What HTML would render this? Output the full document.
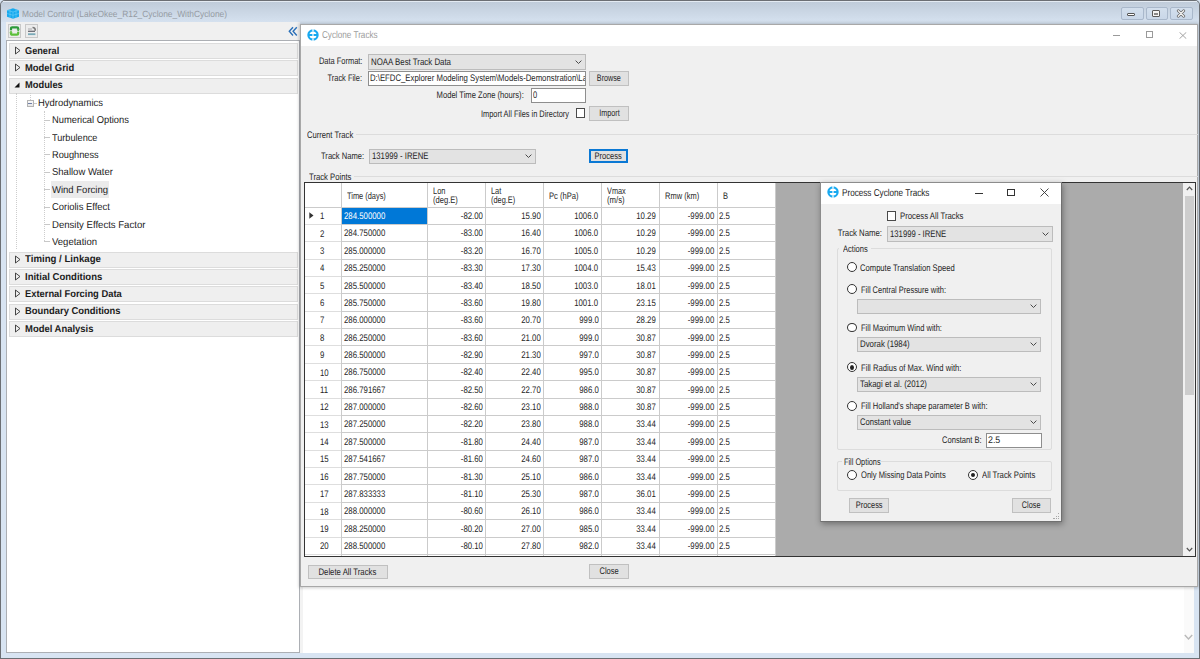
<!DOCTYPE html>
<html><head><meta charset="utf-8">
<style>
*{box-sizing:border-box;margin:0;padding:0}
html,body{width:1200px;height:659px;overflow:hidden;text-rendering:geometricPrecision;background:#d8e4f2;font-family:"Liberation Sans",sans-serif;color:#1a1a1a}
.a{position:absolute}
.t{position:absolute;white-space:nowrap;line-height:1}
</style></head><body>
<div class="a" style="left:0px;top:0px;width:1200px;height:659px;background:#6c6f74;border-radius:5px 5px 0 0"></div>
<div class="a" style="left:1px;top:1px;width:1198px;height:657px;background:#d8e4f2;border-radius:5px 5px 0 0"></div>
<div class="a" style="left:1px;top:1px;width:1198px;height:21px;background:linear-gradient(#bfcbd9,#d5e1ef);border-radius:4px 4px 0 0"></div>
<div class="a" style="left:3px;top:1px;width:1194px;height:1px;background:#e4ebf3"></div>
<svg class="a" style="left:6px;top:7px" width="14" height="13" viewBox="0 0 14 13"><path d="M1 3.2 L7 1.3 L13 3.2 L13 9.8 L7 11.8 L1 9.8 Z" fill="#17a9ee"/><path d="M1 3.2 L7 5 L13 3.2 M7 5 L7 11.8 M4 2.2 L4 10.8 M10 2.2 L10 10.8 M1 6.5 L7 8.3 L13 6.5" stroke="#6fd0f8" stroke-width="0.7" fill="none" opacity="0.8"/></svg>
<div class="t" style="left:22.00px;top:10.40px;font-size:9.0px;color:#959ba3;font-weight:normal;letter-spacing:0px;transform:scaleX(0.9314);transform-origin:0 0;">Model Control (LakeOkee_R12_Cyclone_WithCyclone)</div>
<div class="a" style="left:1121px;top:7px;width:23px;height:13px;border:1px solid #a9b8cb;border-radius:2px;background:linear-gradient(#d3dfed,#c9d7e8)"></div>
<div class="a" style="left:1146px;top:7px;width:22px;height:13px;border:1px solid #a9b8cb;border-radius:2px;background:linear-gradient(#d3dfed,#c9d7e8)"></div>
<div class="a" style="left:1170px;top:7px;width:23px;height:13px;border:1px solid #a9b8cb;border-radius:2px;background:linear-gradient(#d3dfed,#c9d7e8)"></div>
<div class="a" style="left:1127px;top:13px;width:8px;height:3px;background:#fff;border:1px solid #555;border-radius:1px"></div>
<div class="a" style="left:1152px;top:10px;width:8px;height:7px;background:#f4f4f4;border:1.5px solid #5a5a5a;border-radius:1px"></div>
<div class="a" style="left:1154px;top:12.5px;width:4px;height:2px;background:#888"></div>
<svg class="a" style="left:1176px;top:9px" width="10" height="9" viewBox="0 0 10 9"><path d="M2.3 1.8 L7.7 7.2 M7.7 1.8 L2.3 7.2" stroke="#666" stroke-width="2.8" stroke-linecap="round"/><path d="M2.3 1.8 L7.7 7.2 M7.7 1.8 L2.3 7.2" stroke="#f4f4f4" stroke-width="1.3" stroke-linecap="round"/></svg>
<div class="a" style="left:6px;top:22px;width:294px;height:19px;background:#f0f0f0"></div>
<div class="a" style="left:8px;top:24px;width:13px;height:14px;border:1px solid #c8c8c8;background:#ececec"></div>
<svg class="a" style="left:9px;top:25px" width="11" height="12" viewBox="0 0 11 12"><path d="M2 5.2 V3.5 Q2 2.3 3.2 2.3 H8 Q9.2 2.3 9.2 3.5 V4.8" stroke="#2d9a3a" stroke-width="2.2" fill="none"/><path d="M9.2 6.8 V8.5 Q9.2 9.7 8 9.7 H3.2 Q2 9.7 2 8.5 V7.2" stroke="#5cbf3a" stroke-width="2.2" fill="none"/><path d="M7.6 4.6 L10.8 4.6 L9.2 6.4 Z" fill="#3aa83a"/><path d="M0.4 7.4 L3.6 7.4 L2 5.6 Z" fill="#5cbf3a"/></svg>
<div class="a" style="left:25px;top:24px;width:13px;height:14px;border:1px solid #c8c8c8;background:#ececec"></div>
<svg class="a" style="left:26px;top:25px" width="11" height="12" viewBox="0 0 11 12"><path d="M2 4 H6" stroke="#9a9aa0" stroke-width="0.8"/><path d="M2 6.3 H9" stroke="#6a6a72" stroke-width="1.3"/><path d="M6.5 2.5 Q9.5 2.5 9.2 5.8" stroke="#777" stroke-width="1.6" fill="none"/><rect x="2" y="8.3" width="7.4" height="1.8" fill="#7aaab8"/></svg>
<svg class="a" style="left:287.5px;top:26px" width="10" height="11" viewBox="0 0 10 11"><path d="M5 1.2 L1.3 5.3 L5 9.5 M8.8 1.2 L5.1 5.3 L8.8 9.5" stroke="#2b70b8" stroke-width="1.4" fill="none"/></svg>
<div class="a" style="left:6px;top:40px;width:294px;height:613px;background:#fff;border:1px solid #acafb4"></div>
<div class="a" style="left:9px;top:43px;width:289px;height:16px;background:#efefef;border:1px solid #dcdcdc"></div>
<svg class="a" style="left:13.8px;top:46.00px" width="8" height="9" viewBox="0 0 8 9"><path d="M1.5 1 L6 4.5 L1.5 8 Z" fill="none" stroke="#333" stroke-width="0.9"/></svg>
<div class="t" style="left:24.60px;top:46.70px;font-size:10px;color:#1c1c1c;font-weight:bold;letter-spacing:0px;transform:scaleX(0.9181);transform-origin:0 0;">General</div>
<div class="a" style="left:9px;top:60px;width:289px;height:16px;background:#efefef;border:1px solid #dcdcdc"></div>
<svg class="a" style="left:13.8px;top:63.38px" width="8" height="9" viewBox="0 0 8 9"><path d="M1.5 1 L6 4.5 L1.5 8 Z" fill="none" stroke="#333" stroke-width="0.9"/></svg>
<div class="t" style="left:24.60px;top:64.08px;font-size:10px;color:#1c1c1c;font-weight:bold;letter-spacing:0px;transform:scaleX(0.9419);transform-origin:0 0;">Model Grid</div>
<div class="a" style="left:9px;top:78px;width:289px;height:16px;background:#efefef;border:1px solid #dcdcdc"></div>
<svg class="a" style="left:13px;top:80.95px" width="8" height="8" viewBox="0 0 8 8"><path d="M6.5 1.5 L6.5 6.5 L1.5 6.5 Z" fill="#111"/></svg>
<div class="t" style="left:24.60px;top:81.45px;font-size:10px;color:#1c1c1c;font-weight:bold;letter-spacing:0px;transform:scaleX(0.9319);transform-origin:0 0;">Modules</div>
<div class="a" style="left:16px;top:93px;width:0;height:156px;border-left:1px dotted #cdcdcd"></div>
<div class="a" style="left:29.5px;top:93px;width:0;height:7px;border-left:1px dotted #cdcdcd"></div>
<div class="a" style="left:27px;top:100px;width:7px;height:7px;border:1px solid #b4b4b4;background:linear-gradient(#fafafa,#e6e6e6)"></div>
<div class="a" style="left:28px;top:103px;width:4px;height:1px;background:#6f7fa8"></div>
<div class="a" style="left:33.5px;top:103px;width:3px;height:0;border-top:1px solid #c8c8c8"></div>
<div class="t" style="left:38.30px;top:99.00px;font-size:10px;color:#1c1c1c;font-weight:normal;letter-spacing:0px;transform:scaleX(0.9431);transform-origin:0 0;">Hydrodynamics</div>
<div class="a" style="left:43.5px;top:111px;width:0;height:130.32px;border-left:1px dotted #cdcdcd"></div>
<div class="a" style="left:44px;top:119.70px;width:6px;height:0;border-top:1px solid #c8c8c8"></div>
<div class="t" style="left:52.10px;top:116.30px;font-size:10px;color:#1c1c1c;font-weight:normal;letter-spacing:0px;transform:scaleX(0.9348);transform-origin:0 0;">Numerical Options</div>
<div class="a" style="left:44px;top:137.07px;width:6px;height:0;border-top:1px solid #c8c8c8"></div>
<div class="t" style="left:52.10px;top:133.68px;font-size:10px;color:#1c1c1c;font-weight:normal;letter-spacing:0px;transform:scaleX(0.9140);transform-origin:0 0;">Turbulence</div>
<div class="a" style="left:44px;top:154.45px;width:6px;height:0;border-top:1px solid #c8c8c8"></div>
<div class="t" style="left:52.10px;top:151.05px;font-size:10px;color:#1c1c1c;font-weight:normal;letter-spacing:0px;transform:scaleX(0.9230);transform-origin:0 0;">Roughness</div>
<div class="a" style="left:44px;top:171.82px;width:6px;height:0;border-top:1px solid #c8c8c8"></div>
<div class="t" style="left:52.10px;top:168.43px;font-size:10px;color:#1c1c1c;font-weight:normal;letter-spacing:0px;transform:scaleX(0.9499);transform-origin:0 0;">Shallow Water</div>
<div class="a" style="left:44px;top:189.20px;width:6px;height:0;border-top:1px solid #c8c8c8"></div>
<div class="a" style="left:51px;top:181px;width:58px;height:17px;background:#ebebeb"></div>
<div class="t" style="left:52.10px;top:185.80px;font-size:10px;color:#1c1c1c;font-weight:normal;letter-spacing:0px;transform:scaleX(0.9507);transform-origin:0 0;">Wind Forcing</div>
<div class="a" style="left:44px;top:206.57px;width:6px;height:0;border-top:1px solid #c8c8c8"></div>
<div class="t" style="left:52.10px;top:203.18px;font-size:10px;color:#1c1c1c;font-weight:normal;letter-spacing:0px;transform:scaleX(0.9412);transform-origin:0 0;">Coriolis Effect</div>
<div class="a" style="left:44px;top:223.95px;width:6px;height:0;border-top:1px solid #c8c8c8"></div>
<div class="t" style="left:52.10px;top:220.55px;font-size:10px;color:#1c1c1c;font-weight:normal;letter-spacing:0px;transform:scaleX(0.9566);transform-origin:0 0;">Density Effects Factor</div>
<div class="a" style="left:44px;top:241.32px;width:6px;height:0;border-top:1px solid #c8c8c8"></div>
<div class="t" style="left:52.10px;top:237.93px;font-size:10px;color:#1c1c1c;font-weight:normal;letter-spacing:0px;transform:scaleX(0.9521);transform-origin:0 0;">Vegetation</div>
<div class="a" style="left:9px;top:252px;width:289px;height:16px;background:#efefef;border:1px solid #dcdcdc"></div>
<svg class="a" style="left:13.8px;top:254.50px" width="8" height="9" viewBox="0 0 8 9"><path d="M1.5 1 L6 4.5 L1.5 8 Z" fill="none" stroke="#333" stroke-width="0.9"/></svg>
<div class="t" style="left:24.60px;top:255.20px;font-size:10px;color:#1c1c1c;font-weight:bold;letter-spacing:0px;transform:scaleX(0.9642);transform-origin:0 0;">Timing / Linkage</div>
<div class="a" style="left:9px;top:269px;width:289px;height:16px;background:#efefef;border:1px solid #dcdcdc"></div>
<svg class="a" style="left:13.8px;top:271.88px" width="8" height="9" viewBox="0 0 8 9"><path d="M1.5 1 L6 4.5 L1.5 8 Z" fill="none" stroke="#333" stroke-width="0.9"/></svg>
<div class="t" style="left:24.60px;top:272.57px;font-size:10px;color:#1c1c1c;font-weight:bold;letter-spacing:0px;transform:scaleX(0.9530);transform-origin:0 0;">Initial Conditions</div>
<div class="a" style="left:9px;top:286px;width:289px;height:16px;background:#efefef;border:1px solid #dcdcdc"></div>
<svg class="a" style="left:13.8px;top:289.25px" width="8" height="9" viewBox="0 0 8 9"><path d="M1.5 1 L6 4.5 L1.5 8 Z" fill="none" stroke="#333" stroke-width="0.9"/></svg>
<div class="t" style="left:24.60px;top:289.95px;font-size:10px;color:#1c1c1c;font-weight:bold;letter-spacing:0px;transform:scaleX(0.9356);transform-origin:0 0;">External Forcing Data</div>
<div class="a" style="left:9px;top:304px;width:289px;height:16px;background:#efefef;border:1px solid #dcdcdc"></div>
<svg class="a" style="left:13.8px;top:306.62px" width="8" height="9" viewBox="0 0 8 9"><path d="M1.5 1 L6 4.5 L1.5 8 Z" fill="none" stroke="#333" stroke-width="0.9"/></svg>
<div class="t" style="left:24.60px;top:307.32px;font-size:10px;color:#1c1c1c;font-weight:bold;letter-spacing:0px;transform:scaleX(0.9403);transform-origin:0 0;">Boundary Conditions</div>
<div class="a" style="left:9px;top:321px;width:289px;height:16px;background:#efefef;border:1px solid #dcdcdc"></div>
<svg class="a" style="left:13.8px;top:324.00px" width="8" height="9" viewBox="0 0 8 9"><path d="M1.5 1 L6 4.5 L1.5 8 Z" fill="none" stroke="#333" stroke-width="0.9"/></svg>
<div class="t" style="left:24.60px;top:324.70px;font-size:10px;color:#1c1c1c;font-weight:bold;letter-spacing:0px;transform:scaleX(0.9456);transform-origin:0 0;">Model Analysis</div>
<div class="a" style="left:300px;top:40px;width:894px;height:613px;background:#fff"></div>
<div class="a" style="left:300px;top:40px;width:3px;height:613px;background:#f3f3f3"></div>
<div class="a" style="left:1184px;top:587px;width:10px;height:66px;background:#fafafa"></div>
<svg class="a" style="left:1183.5px;top:634px" width="9" height="7" viewBox="0 0 9 7"><path d="M0.8 1 L4.5 5 L8.2 1" stroke="#b9b9b9" stroke-width="1.4" fill="none"/></svg>
<div class="a" style="left:300px;top:24px;width:898px;height:563px;background:#f0f0f0;border:1px solid #a8a8a8;box-shadow:0 0 3px 1px rgba(0,0,0,.2)"></div>
<div class="a" style="left:301px;top:25px;width:896px;height:21px;background:#fff"></div>
<svg class="a" style="left:306.7px;top:28.8px" width="12" height="12" viewBox="0 0 12 12"><circle cx="6" cy="6" r="4.6" stroke="#18a9f0" stroke-width="2.2" fill="none"/><path d="M2 6 H5.4 M6.6 6 H10" stroke="#18a9f0" stroke-width="2"/><rect x="5.35" y="0" width="1.3" height="2.6" fill="#fff"/><rect x="5.35" y="9.4" width="1.3" height="2.6" fill="#fff"/></svg>
<div class="t" style="left:322.40px;top:30.90px;font-size:10px;color:#9c9c9c;font-weight:normal;letter-spacing:0px;transform:scaleX(0.8133);transform-origin:0 0;">Cyclone Tracks</div>
<div class="a" style="left:1113px;top:35px;width:7px;height:1px;background:#9a9a9a"></div>
<div class="a" style="left:1146px;top:31px;width:7px;height:7px;border:1px solid #9a9a9a"></div>
<svg class="a" style="left:1178.8px;top:31.8px" width="8" height="7" viewBox="0 0 8 7"><path d="M0.5 0.3 L7.3 6.7 M7.3 0.3 L0.5 6.7" stroke="#9a9a9a" stroke-width="0.9"/></svg>
<div class="t" style="left:306.56px;top:56.65px;font-size:9.5px;color:#1f1f1f;font-weight:normal;letter-spacing:0px;transform:scaleX(0.7847);transform-origin:100% 0;">Data Format:</div>
<div class="a" style="left:368px;top:54px;width:218px;height:16px;background:#e3e3e3;border:1px solid #bcbcbc"></div>
<svg class="a" style="left:575.10px;top:59.65px" width="7" height="5" viewBox="0 0 7 5"><path d="M0.6 0.6 L3.5 3.5 L6.4 0.6" stroke="#4a4a4a" stroke-width="1" fill="none"/></svg>
<div class="t" style="left:370.80px;top:57.70px;font-size:9.5px;color:#1f1f1f;font-weight:normal;letter-spacing:0px;transform:scaleX(0.8279);transform-origin:0 0;">NOAA Best Track Data</div>
<div class="t" style="left:318.02px;top:73.85px;font-size:9.5px;color:#1f1f1f;font-weight:normal;letter-spacing:0px;transform:scaleX(0.7844);transform-origin:100% 0;">Track File:</div>
<div class="a" style="left:368px;top:71px;width:218px;height:15px;background:#fff;border:1px solid #8e8e8e"></div>
<div class="a" style="left:369.3px;top:72.2px;width:215.3px;height:12.4px;overflow:hidden">
<div class="t" style="left:0.90px;top:2.15px;font-size:9.5px;color:#1f1f1f;font-weight:normal;letter-spacing:0px;transform:scaleX(0.8171);transform-origin:0 0;">D:\EFDC_Explorer Modeling System\Models-Demonstration\La</div>
</div>
<div class="a" style="left:589px;top:71px;width:40px;height:15px;background:#e1e1e1;border:1px solid #c0c0c0"></div>
<div class="t" style="left:593.16px;top:74.05px;font-size:9.5px;color:#1f1f1f;font-weight:normal;letter-spacing:0px;transform:scaleX(0.7574);transform-origin:50% 0;">Browse</div>
<div class="t" style="left:414.83px;top:90.85px;font-size:9.5px;color:#1f1f1f;font-weight:normal;letter-spacing:0px;transform:scaleX(0.8017);transform-origin:100% 0;">Model Time Zone (hours):</div>
<div class="a" style="left:531px;top:88px;width:55px;height:15px;background:#fff;border:1px solid #8e8e8e"></div>
<div class="t" style="left:533.10px;top:91.35px;font-size:9.5px;color:#1f1f1f;font-weight:normal;letter-spacing:0px;transform:scaleX(0.7900);transform-origin:0 0;">0</div>
<div class="t" style="left:456.32px;top:109.95px;font-size:9.5px;color:#1f1f1f;font-weight:normal;letter-spacing:0px;transform:scaleX(0.7789);transform-origin:100% 0;">Import All Files in Directory</div>
<div class="a" style="left:576px;top:108px;width:9px;height:10px;background:#fff;border:1px solid #4a4a4a"></div>
<div class="a" style="left:589px;top:106px;width:40px;height:15px;background:#e1e1e1;border:1px solid #c0c0c0"></div>
<div class="t" style="left:595.53px;top:109.40px;font-size:9.5px;color:#1f1f1f;font-weight:normal;letter-spacing:0px;transform:scaleX(0.7573);transform-origin:50% 0;">Import</div>
<div class="a" style="left:356px;top:134px;width:842px;height:1px;background:#dcdcdc"></div>
<div class="t" style="left:307.20px;top:130.75px;font-size:9.5px;color:#1f1f1f;font-weight:normal;letter-spacing:0px;transform:scaleX(0.8028);transform-origin:0 0;">Current Track</div>
<div class="t" style="left:309.57px;top:152.35px;font-size:9.5px;color:#1f1f1f;font-weight:normal;letter-spacing:0px;transform:scaleX(0.7958);transform-origin:100% 0;">Track Name:</div>
<div class="a" style="left:369px;top:149px;width:167px;height:15px;background:#e3e3e3;border:1px solid #bcbcbc"></div>
<svg class="a" style="left:525.10px;top:154.30px" width="7" height="5" viewBox="0 0 7 5"><path d="M0.6 0.6 L3.5 3.5 L6.4 0.6" stroke="#4a4a4a" stroke-width="1" fill="none"/></svg>
<div class="t" style="left:371.90px;top:152.35px;font-size:9.5px;color:#1f1f1f;font-weight:normal;letter-spacing:0px;transform:scaleX(0.8152);transform-origin:0 0;">131999 - IRENE</div>
<div class="a" style="left:589px;top:149px;width:39px;height:14px;background:#e1e1e1;border:2px solid #0a78d4"></div>
<div class="t" style="left:591.39px;top:151.85px;font-size:9.5px;color:#1f1f1f;font-weight:normal;letter-spacing:0px;transform:scaleX(0.7953);transform-origin:50% 0;">Process</div>
<div class="a" style="left:354px;top:176px;width:844px;height:1px;background:#dcdcdc"></div>
<div class="t" style="left:309.40px;top:172.95px;font-size:9.5px;color:#1f1f1f;font-weight:normal;letter-spacing:0px;transform:scaleX(0.8083);transform-origin:0 0;">Track Points</div>
<div class="a" style="left:304px;top:182px;width:892px;height:375px;background:#ababab;border:1px solid #333"></div>
<div class="a" style="left:305px;top:183px;width:470px;height:373px;background:#fff"></div>
<div class="a" style="left:341px;top:183px;width:1px;height:373px;background:#cbcbcb"></div>
<div class="a" style="left:427px;top:183px;width:1px;height:373px;background:#cbcbcb"></div>
<div class="a" style="left:485px;top:183px;width:1px;height:373px;background:#cbcbcb"></div>
<div class="a" style="left:543px;top:183px;width:1px;height:373px;background:#cbcbcb"></div>
<div class="a" style="left:601px;top:183px;width:1px;height:373px;background:#cbcbcb"></div>
<div class="a" style="left:659px;top:183px;width:1px;height:373px;background:#cbcbcb"></div>
<div class="a" style="left:717px;top:183px;width:1px;height:373px;background:#cbcbcb"></div>
<div class="a" style="left:775px;top:183px;width:1px;height:373px;background:#cbcbcb"></div>
<div class="a" style="left:305px;top:207px;width:470px;height:1px;background:#cbcbcb"></div>
<div class="a" style="left:341px;top:224px;width:434px;height:1px;background:#cbcbcb"></div>
<div class="a" style="left:305px;top:224px;width:36px;height:1px;background:#dedede"></div>
<div class="a" style="left:341px;top:241px;width:434px;height:1px;background:#cbcbcb"></div>
<div class="a" style="left:305px;top:241px;width:36px;height:1px;background:#dedede"></div>
<div class="a" style="left:341px;top:259px;width:434px;height:1px;background:#cbcbcb"></div>
<div class="a" style="left:305px;top:259px;width:36px;height:1px;background:#dedede"></div>
<div class="a" style="left:341px;top:276px;width:434px;height:1px;background:#cbcbcb"></div>
<div class="a" style="left:305px;top:276px;width:36px;height:1px;background:#dedede"></div>
<div class="a" style="left:341px;top:293px;width:434px;height:1px;background:#cbcbcb"></div>
<div class="a" style="left:305px;top:293px;width:36px;height:1px;background:#dedede"></div>
<div class="a" style="left:341px;top:311px;width:434px;height:1px;background:#cbcbcb"></div>
<div class="a" style="left:305px;top:311px;width:36px;height:1px;background:#dedede"></div>
<div class="a" style="left:341px;top:328px;width:434px;height:1px;background:#cbcbcb"></div>
<div class="a" style="left:305px;top:328px;width:36px;height:1px;background:#dedede"></div>
<div class="a" style="left:341px;top:345px;width:434px;height:1px;background:#cbcbcb"></div>
<div class="a" style="left:305px;top:345px;width:36px;height:1px;background:#dedede"></div>
<div class="a" style="left:341px;top:363px;width:434px;height:1px;background:#cbcbcb"></div>
<div class="a" style="left:305px;top:363px;width:36px;height:1px;background:#dedede"></div>
<div class="a" style="left:341px;top:380px;width:434px;height:1px;background:#cbcbcb"></div>
<div class="a" style="left:305px;top:380px;width:36px;height:1px;background:#dedede"></div>
<div class="a" style="left:341px;top:398px;width:434px;height:1px;background:#cbcbcb"></div>
<div class="a" style="left:305px;top:398px;width:36px;height:1px;background:#dedede"></div>
<div class="a" style="left:341px;top:415px;width:434px;height:1px;background:#cbcbcb"></div>
<div class="a" style="left:305px;top:415px;width:36px;height:1px;background:#dedede"></div>
<div class="a" style="left:341px;top:432px;width:434px;height:1px;background:#cbcbcb"></div>
<div class="a" style="left:305px;top:432px;width:36px;height:1px;background:#dedede"></div>
<div class="a" style="left:341px;top:450px;width:434px;height:1px;background:#cbcbcb"></div>
<div class="a" style="left:305px;top:450px;width:36px;height:1px;background:#dedede"></div>
<div class="a" style="left:341px;top:467px;width:434px;height:1px;background:#cbcbcb"></div>
<div class="a" style="left:305px;top:467px;width:36px;height:1px;background:#dedede"></div>
<div class="a" style="left:341px;top:484px;width:434px;height:1px;background:#cbcbcb"></div>
<div class="a" style="left:305px;top:484px;width:36px;height:1px;background:#dedede"></div>
<div class="a" style="left:341px;top:502px;width:434px;height:1px;background:#cbcbcb"></div>
<div class="a" style="left:305px;top:502px;width:36px;height:1px;background:#dedede"></div>
<div class="a" style="left:341px;top:519px;width:434px;height:1px;background:#cbcbcb"></div>
<div class="a" style="left:305px;top:519px;width:36px;height:1px;background:#dedede"></div>
<div class="a" style="left:341px;top:537px;width:434px;height:1px;background:#cbcbcb"></div>
<div class="a" style="left:305px;top:537px;width:36px;height:1px;background:#dedede"></div>
<div class="a" style="left:341px;top:554px;width:434px;height:1px;background:#cbcbcb"></div>
<div class="a" style="left:305px;top:554px;width:36px;height:1px;background:#dedede"></div>
<div class="t" style="left:346.70px;top:191.65px;font-size:9.5px;color:#1f1f1f;font-weight:normal;letter-spacing:0px;transform:scaleX(0.7792);transform-origin:0 0;">Time (days)</div>
<div class="t" style="left:433.10px;top:186.55px;font-size:9.5px;color:#1f1f1f;font-weight:normal;letter-spacing:0px;transform:scaleX(0.7819);transform-origin:0 0;">Lon</div>
<div class="t" style="left:433.10px;top:196.05px;font-size:9.5px;color:#1f1f1f;font-weight:normal;letter-spacing:0px;transform:scaleX(0.7992);transform-origin:0 0;">(deg.E)</div>
<div class="t" style="left:491.30px;top:186.55px;font-size:9.5px;color:#1f1f1f;font-weight:normal;letter-spacing:0px;transform:scaleX(0.7792);transform-origin:0 0;">Lat</div>
<div class="t" style="left:491.30px;top:196.05px;font-size:9.5px;color:#1f1f1f;font-weight:normal;letter-spacing:0px;transform:scaleX(0.7767);transform-origin:0 0;">(deg.E)</div>
<div class="t" style="left:549.30px;top:191.65px;font-size:9.5px;color:#1f1f1f;font-weight:normal;letter-spacing:0px;transform:scaleX(0.8007);transform-origin:0 0;">Pc (hPa)</div>
<div class="t" style="left:606.90px;top:186.55px;font-size:9.5px;color:#1f1f1f;font-weight:normal;letter-spacing:0px;transform:scaleX(0.7696);transform-origin:0 0;">Vmax</div>
<div class="t" style="left:606.90px;top:196.05px;font-size:9.5px;color:#1f1f1f;font-weight:normal;letter-spacing:0px;transform:scaleX(0.8179);transform-origin:0 0;">(m/s)</div>
<div class="t" style="left:665.10px;top:191.65px;font-size:9.5px;color:#1f1f1f;font-weight:normal;letter-spacing:0px;transform:scaleX(0.7905);transform-origin:0 0;">Rmw (km)</div>
<div class="t" style="left:722.60px;top:191.65px;font-size:9.5px;color:#1f1f1f;font-weight:normal;letter-spacing:0px;transform:scaleX(0.7882);transform-origin:0 0;">B</div>
<div class="a" style="left:342px;top:208px;width:85px;height:16px;background:#0078d7"></div>
<svg class="a" style="left:309px;top:212.19px" width="5" height="7" viewBox="0 0 5 7"><path d="M0.3 0.2 L4.5 3.5 L0.3 6.8 Z" fill="#333"/></svg>
<div class="t" style="left:343.50px;top:212.04px;font-size:9.5px;color:#fff;font-weight:normal;letter-spacing:0px;transform:scaleX(0.8225);transform-origin:0 0;">284.500000</div>
<div class="t" style="left:319.80px;top:212.24px;font-size:9.5px;color:#1f1f1f;font-weight:normal;letter-spacing:0px;transform:scaleX(0.8225);transform-origin:0 0;">1</div>
<div class="t" style="left:455.96px;top:212.04px;font-size:9.5px;color:#1f1f1f;font-weight:normal;letter-spacing:0px;transform:scaleX(0.8225);transform-origin:100% 0;">-82.00</div>
<div class="t" style="left:516.62px;top:212.04px;font-size:9.5px;color:#1f1f1f;font-weight:normal;letter-spacing:0px;transform:scaleX(0.8225);transform-origin:100% 0;">15.90</div>
<div class="t" style="left:569.44px;top:212.04px;font-size:9.5px;color:#1f1f1f;font-weight:normal;letter-spacing:0px;transform:scaleX(0.8225);transform-origin:100% 0;">1006.0</div>
<div class="t" style="left:632.12px;top:212.04px;font-size:9.5px;color:#1f1f1f;font-weight:normal;letter-spacing:0px;transform:scaleX(0.8225);transform-origin:100% 0;">10.29</div>
<div class="t" style="left:682.07px;top:212.04px;font-size:9.5px;color:#1f1f1f;font-weight:normal;letter-spacing:0px;transform:scaleX(0.8225);transform-origin:100% 0;">-999.00</div>
<div class="t" style="left:719.00px;top:212.04px;font-size:9.5px;color:#1f1f1f;font-weight:normal;letter-spacing:0px;transform:scaleX(0.8225);transform-origin:0 0;">2.5</div>
<div class="t" style="left:343.50px;top:229.41px;font-size:9.5px;color:#1f1f1f;font-weight:normal;letter-spacing:0px;transform:scaleX(0.8225);transform-origin:0 0;">284.750000</div>
<div class="t" style="left:319.80px;top:229.61px;font-size:9.5px;color:#1f1f1f;font-weight:normal;letter-spacing:0px;transform:scaleX(0.8225);transform-origin:0 0;">2</div>
<div class="t" style="left:455.96px;top:229.41px;font-size:9.5px;color:#1f1f1f;font-weight:normal;letter-spacing:0px;transform:scaleX(0.8225);transform-origin:100% 0;">-83.00</div>
<div class="t" style="left:516.62px;top:229.41px;font-size:9.5px;color:#1f1f1f;font-weight:normal;letter-spacing:0px;transform:scaleX(0.8225);transform-origin:100% 0;">16.40</div>
<div class="t" style="left:569.44px;top:229.41px;font-size:9.5px;color:#1f1f1f;font-weight:normal;letter-spacing:0px;transform:scaleX(0.8225);transform-origin:100% 0;">1006.0</div>
<div class="t" style="left:632.12px;top:229.41px;font-size:9.5px;color:#1f1f1f;font-weight:normal;letter-spacing:0px;transform:scaleX(0.8225);transform-origin:100% 0;">10.29</div>
<div class="t" style="left:682.07px;top:229.41px;font-size:9.5px;color:#1f1f1f;font-weight:normal;letter-spacing:0px;transform:scaleX(0.8225);transform-origin:100% 0;">-999.00</div>
<div class="t" style="left:719.00px;top:229.41px;font-size:9.5px;color:#1f1f1f;font-weight:normal;letter-spacing:0px;transform:scaleX(0.8225);transform-origin:0 0;">2.5</div>
<div class="t" style="left:343.50px;top:246.78px;font-size:9.5px;color:#1f1f1f;font-weight:normal;letter-spacing:0px;transform:scaleX(0.8225);transform-origin:0 0;">285.000000</div>
<div class="t" style="left:319.80px;top:246.98px;font-size:9.5px;color:#1f1f1f;font-weight:normal;letter-spacing:0px;transform:scaleX(0.8225);transform-origin:0 0;">3</div>
<div class="t" style="left:455.96px;top:246.78px;font-size:9.5px;color:#1f1f1f;font-weight:normal;letter-spacing:0px;transform:scaleX(0.8225);transform-origin:100% 0;">-83.20</div>
<div class="t" style="left:516.62px;top:246.78px;font-size:9.5px;color:#1f1f1f;font-weight:normal;letter-spacing:0px;transform:scaleX(0.8225);transform-origin:100% 0;">16.70</div>
<div class="t" style="left:569.44px;top:246.78px;font-size:9.5px;color:#1f1f1f;font-weight:normal;letter-spacing:0px;transform:scaleX(0.8225);transform-origin:100% 0;">1005.0</div>
<div class="t" style="left:632.12px;top:246.78px;font-size:9.5px;color:#1f1f1f;font-weight:normal;letter-spacing:0px;transform:scaleX(0.8225);transform-origin:100% 0;">10.29</div>
<div class="t" style="left:682.07px;top:246.78px;font-size:9.5px;color:#1f1f1f;font-weight:normal;letter-spacing:0px;transform:scaleX(0.8225);transform-origin:100% 0;">-999.00</div>
<div class="t" style="left:719.00px;top:246.78px;font-size:9.5px;color:#1f1f1f;font-weight:normal;letter-spacing:0px;transform:scaleX(0.8225);transform-origin:0 0;">2.5</div>
<div class="t" style="left:343.50px;top:264.15px;font-size:9.5px;color:#1f1f1f;font-weight:normal;letter-spacing:0px;transform:scaleX(0.8225);transform-origin:0 0;">285.250000</div>
<div class="t" style="left:319.80px;top:264.35px;font-size:9.5px;color:#1f1f1f;font-weight:normal;letter-spacing:0px;transform:scaleX(0.8225);transform-origin:0 0;">4</div>
<div class="t" style="left:455.96px;top:264.15px;font-size:9.5px;color:#1f1f1f;font-weight:normal;letter-spacing:0px;transform:scaleX(0.8225);transform-origin:100% 0;">-83.30</div>
<div class="t" style="left:516.62px;top:264.15px;font-size:9.5px;color:#1f1f1f;font-weight:normal;letter-spacing:0px;transform:scaleX(0.8225);transform-origin:100% 0;">17.30</div>
<div class="t" style="left:569.44px;top:264.15px;font-size:9.5px;color:#1f1f1f;font-weight:normal;letter-spacing:0px;transform:scaleX(0.8225);transform-origin:100% 0;">1004.0</div>
<div class="t" style="left:632.12px;top:264.15px;font-size:9.5px;color:#1f1f1f;font-weight:normal;letter-spacing:0px;transform:scaleX(0.8225);transform-origin:100% 0;">15.43</div>
<div class="t" style="left:682.07px;top:264.15px;font-size:9.5px;color:#1f1f1f;font-weight:normal;letter-spacing:0px;transform:scaleX(0.8225);transform-origin:100% 0;">-999.00</div>
<div class="t" style="left:719.00px;top:264.15px;font-size:9.5px;color:#1f1f1f;font-weight:normal;letter-spacing:0px;transform:scaleX(0.8225);transform-origin:0 0;">2.5</div>
<div class="t" style="left:343.50px;top:281.52px;font-size:9.5px;color:#1f1f1f;font-weight:normal;letter-spacing:0px;transform:scaleX(0.8225);transform-origin:0 0;">285.500000</div>
<div class="t" style="left:319.80px;top:281.72px;font-size:9.5px;color:#1f1f1f;font-weight:normal;letter-spacing:0px;transform:scaleX(0.8225);transform-origin:0 0;">5</div>
<div class="t" style="left:455.96px;top:281.52px;font-size:9.5px;color:#1f1f1f;font-weight:normal;letter-spacing:0px;transform:scaleX(0.8225);transform-origin:100% 0;">-83.40</div>
<div class="t" style="left:516.62px;top:281.52px;font-size:9.5px;color:#1f1f1f;font-weight:normal;letter-spacing:0px;transform:scaleX(0.8225);transform-origin:100% 0;">18.50</div>
<div class="t" style="left:569.44px;top:281.52px;font-size:9.5px;color:#1f1f1f;font-weight:normal;letter-spacing:0px;transform:scaleX(0.8225);transform-origin:100% 0;">1003.0</div>
<div class="t" style="left:632.12px;top:281.52px;font-size:9.5px;color:#1f1f1f;font-weight:normal;letter-spacing:0px;transform:scaleX(0.8225);transform-origin:100% 0;">18.01</div>
<div class="t" style="left:682.07px;top:281.52px;font-size:9.5px;color:#1f1f1f;font-weight:normal;letter-spacing:0px;transform:scaleX(0.8225);transform-origin:100% 0;">-999.00</div>
<div class="t" style="left:719.00px;top:281.52px;font-size:9.5px;color:#1f1f1f;font-weight:normal;letter-spacing:0px;transform:scaleX(0.8225);transform-origin:0 0;">2.5</div>
<div class="t" style="left:343.50px;top:298.89px;font-size:9.5px;color:#1f1f1f;font-weight:normal;letter-spacing:0px;transform:scaleX(0.8225);transform-origin:0 0;">285.750000</div>
<div class="t" style="left:319.80px;top:299.09px;font-size:9.5px;color:#1f1f1f;font-weight:normal;letter-spacing:0px;transform:scaleX(0.8225);transform-origin:0 0;">6</div>
<div class="t" style="left:455.96px;top:298.89px;font-size:9.5px;color:#1f1f1f;font-weight:normal;letter-spacing:0px;transform:scaleX(0.8225);transform-origin:100% 0;">-83.60</div>
<div class="t" style="left:516.62px;top:298.89px;font-size:9.5px;color:#1f1f1f;font-weight:normal;letter-spacing:0px;transform:scaleX(0.8225);transform-origin:100% 0;">19.80</div>
<div class="t" style="left:569.44px;top:298.89px;font-size:9.5px;color:#1f1f1f;font-weight:normal;letter-spacing:0px;transform:scaleX(0.8225);transform-origin:100% 0;">1001.0</div>
<div class="t" style="left:632.12px;top:298.89px;font-size:9.5px;color:#1f1f1f;font-weight:normal;letter-spacing:0px;transform:scaleX(0.8225);transform-origin:100% 0;">23.15</div>
<div class="t" style="left:682.07px;top:298.89px;font-size:9.5px;color:#1f1f1f;font-weight:normal;letter-spacing:0px;transform:scaleX(0.8225);transform-origin:100% 0;">-999.00</div>
<div class="t" style="left:719.00px;top:298.89px;font-size:9.5px;color:#1f1f1f;font-weight:normal;letter-spacing:0px;transform:scaleX(0.8225);transform-origin:0 0;">2.5</div>
<div class="t" style="left:343.50px;top:316.26px;font-size:9.5px;color:#1f1f1f;font-weight:normal;letter-spacing:0px;transform:scaleX(0.8225);transform-origin:0 0;">286.000000</div>
<div class="t" style="left:319.80px;top:316.46px;font-size:9.5px;color:#1f1f1f;font-weight:normal;letter-spacing:0px;transform:scaleX(0.8225);transform-origin:0 0;">7</div>
<div class="t" style="left:455.96px;top:316.26px;font-size:9.5px;color:#1f1f1f;font-weight:normal;letter-spacing:0px;transform:scaleX(0.8225);transform-origin:100% 0;">-83.60</div>
<div class="t" style="left:516.62px;top:316.26px;font-size:9.5px;color:#1f1f1f;font-weight:normal;letter-spacing:0px;transform:scaleX(0.8225);transform-origin:100% 0;">20.70</div>
<div class="t" style="left:574.72px;top:316.26px;font-size:9.5px;color:#1f1f1f;font-weight:normal;letter-spacing:0px;transform:scaleX(0.8225);transform-origin:100% 0;">999.0</div>
<div class="t" style="left:632.12px;top:316.26px;font-size:9.5px;color:#1f1f1f;font-weight:normal;letter-spacing:0px;transform:scaleX(0.8225);transform-origin:100% 0;">28.29</div>
<div class="t" style="left:682.07px;top:316.26px;font-size:9.5px;color:#1f1f1f;font-weight:normal;letter-spacing:0px;transform:scaleX(0.8225);transform-origin:100% 0;">-999.00</div>
<div class="t" style="left:719.00px;top:316.26px;font-size:9.5px;color:#1f1f1f;font-weight:normal;letter-spacing:0px;transform:scaleX(0.8225);transform-origin:0 0;">2.5</div>
<div class="t" style="left:343.50px;top:333.63px;font-size:9.5px;color:#1f1f1f;font-weight:normal;letter-spacing:0px;transform:scaleX(0.8225);transform-origin:0 0;">286.250000</div>
<div class="t" style="left:319.80px;top:333.83px;font-size:9.5px;color:#1f1f1f;font-weight:normal;letter-spacing:0px;transform:scaleX(0.8225);transform-origin:0 0;">8</div>
<div class="t" style="left:455.96px;top:333.63px;font-size:9.5px;color:#1f1f1f;font-weight:normal;letter-spacing:0px;transform:scaleX(0.8225);transform-origin:100% 0;">-83.60</div>
<div class="t" style="left:516.62px;top:333.63px;font-size:9.5px;color:#1f1f1f;font-weight:normal;letter-spacing:0px;transform:scaleX(0.8225);transform-origin:100% 0;">21.00</div>
<div class="t" style="left:574.72px;top:333.63px;font-size:9.5px;color:#1f1f1f;font-weight:normal;letter-spacing:0px;transform:scaleX(0.8225);transform-origin:100% 0;">999.0</div>
<div class="t" style="left:632.12px;top:333.63px;font-size:9.5px;color:#1f1f1f;font-weight:normal;letter-spacing:0px;transform:scaleX(0.8225);transform-origin:100% 0;">30.87</div>
<div class="t" style="left:682.07px;top:333.63px;font-size:9.5px;color:#1f1f1f;font-weight:normal;letter-spacing:0px;transform:scaleX(0.8225);transform-origin:100% 0;">-999.00</div>
<div class="t" style="left:719.00px;top:333.63px;font-size:9.5px;color:#1f1f1f;font-weight:normal;letter-spacing:0px;transform:scaleX(0.8225);transform-origin:0 0;">2.5</div>
<div class="t" style="left:343.50px;top:351.00px;font-size:9.5px;color:#1f1f1f;font-weight:normal;letter-spacing:0px;transform:scaleX(0.8225);transform-origin:0 0;">286.500000</div>
<div class="t" style="left:319.80px;top:351.20px;font-size:9.5px;color:#1f1f1f;font-weight:normal;letter-spacing:0px;transform:scaleX(0.8225);transform-origin:0 0;">9</div>
<div class="t" style="left:455.96px;top:351.00px;font-size:9.5px;color:#1f1f1f;font-weight:normal;letter-spacing:0px;transform:scaleX(0.8225);transform-origin:100% 0;">-82.90</div>
<div class="t" style="left:516.62px;top:351.00px;font-size:9.5px;color:#1f1f1f;font-weight:normal;letter-spacing:0px;transform:scaleX(0.8225);transform-origin:100% 0;">21.30</div>
<div class="t" style="left:574.72px;top:351.00px;font-size:9.5px;color:#1f1f1f;font-weight:normal;letter-spacing:0px;transform:scaleX(0.8225);transform-origin:100% 0;">997.0</div>
<div class="t" style="left:632.12px;top:351.00px;font-size:9.5px;color:#1f1f1f;font-weight:normal;letter-spacing:0px;transform:scaleX(0.8225);transform-origin:100% 0;">30.87</div>
<div class="t" style="left:682.07px;top:351.00px;font-size:9.5px;color:#1f1f1f;font-weight:normal;letter-spacing:0px;transform:scaleX(0.8225);transform-origin:100% 0;">-999.00</div>
<div class="t" style="left:719.00px;top:351.00px;font-size:9.5px;color:#1f1f1f;font-weight:normal;letter-spacing:0px;transform:scaleX(0.8225);transform-origin:0 0;">2.5</div>
<div class="t" style="left:343.50px;top:368.37px;font-size:9.5px;color:#1f1f1f;font-weight:normal;letter-spacing:0px;transform:scaleX(0.8225);transform-origin:0 0;">286.750000</div>
<div class="t" style="left:319.80px;top:368.57px;font-size:9.5px;color:#1f1f1f;font-weight:normal;letter-spacing:0px;transform:scaleX(0.8225);transform-origin:0 0;">10</div>
<div class="t" style="left:455.96px;top:368.37px;font-size:9.5px;color:#1f1f1f;font-weight:normal;letter-spacing:0px;transform:scaleX(0.8225);transform-origin:100% 0;">-82.40</div>
<div class="t" style="left:516.62px;top:368.37px;font-size:9.5px;color:#1f1f1f;font-weight:normal;letter-spacing:0px;transform:scaleX(0.8225);transform-origin:100% 0;">22.40</div>
<div class="t" style="left:574.72px;top:368.37px;font-size:9.5px;color:#1f1f1f;font-weight:normal;letter-spacing:0px;transform:scaleX(0.8225);transform-origin:100% 0;">995.0</div>
<div class="t" style="left:632.12px;top:368.37px;font-size:9.5px;color:#1f1f1f;font-weight:normal;letter-spacing:0px;transform:scaleX(0.8225);transform-origin:100% 0;">30.87</div>
<div class="t" style="left:682.07px;top:368.37px;font-size:9.5px;color:#1f1f1f;font-weight:normal;letter-spacing:0px;transform:scaleX(0.8225);transform-origin:100% 0;">-999.00</div>
<div class="t" style="left:719.00px;top:368.37px;font-size:9.5px;color:#1f1f1f;font-weight:normal;letter-spacing:0px;transform:scaleX(0.8225);transform-origin:0 0;">2.5</div>
<div class="t" style="left:343.50px;top:385.74px;font-size:9.5px;color:#1f1f1f;font-weight:normal;letter-spacing:0px;transform:scaleX(0.8225);transform-origin:0 0;">286.791667</div>
<div class="t" style="left:319.80px;top:385.94px;font-size:9.5px;color:#1f1f1f;font-weight:normal;letter-spacing:0px;transform:scaleX(0.8225);transform-origin:0 0;">11</div>
<div class="t" style="left:455.96px;top:385.74px;font-size:9.5px;color:#1f1f1f;font-weight:normal;letter-spacing:0px;transform:scaleX(0.8225);transform-origin:100% 0;">-82.50</div>
<div class="t" style="left:516.62px;top:385.74px;font-size:9.5px;color:#1f1f1f;font-weight:normal;letter-spacing:0px;transform:scaleX(0.8225);transform-origin:100% 0;">22.70</div>
<div class="t" style="left:574.72px;top:385.74px;font-size:9.5px;color:#1f1f1f;font-weight:normal;letter-spacing:0px;transform:scaleX(0.8225);transform-origin:100% 0;">986.0</div>
<div class="t" style="left:632.12px;top:385.74px;font-size:9.5px;color:#1f1f1f;font-weight:normal;letter-spacing:0px;transform:scaleX(0.8225);transform-origin:100% 0;">30.87</div>
<div class="t" style="left:682.07px;top:385.74px;font-size:9.5px;color:#1f1f1f;font-weight:normal;letter-spacing:0px;transform:scaleX(0.8225);transform-origin:100% 0;">-999.00</div>
<div class="t" style="left:719.00px;top:385.74px;font-size:9.5px;color:#1f1f1f;font-weight:normal;letter-spacing:0px;transform:scaleX(0.8225);transform-origin:0 0;">2.5</div>
<div class="t" style="left:343.50px;top:403.11px;font-size:9.5px;color:#1f1f1f;font-weight:normal;letter-spacing:0px;transform:scaleX(0.8225);transform-origin:0 0;">287.000000</div>
<div class="t" style="left:319.80px;top:403.31px;font-size:9.5px;color:#1f1f1f;font-weight:normal;letter-spacing:0px;transform:scaleX(0.8225);transform-origin:0 0;">12</div>
<div class="t" style="left:455.96px;top:403.11px;font-size:9.5px;color:#1f1f1f;font-weight:normal;letter-spacing:0px;transform:scaleX(0.8225);transform-origin:100% 0;">-82.60</div>
<div class="t" style="left:516.62px;top:403.11px;font-size:9.5px;color:#1f1f1f;font-weight:normal;letter-spacing:0px;transform:scaleX(0.8225);transform-origin:100% 0;">23.10</div>
<div class="t" style="left:574.72px;top:403.11px;font-size:9.5px;color:#1f1f1f;font-weight:normal;letter-spacing:0px;transform:scaleX(0.8225);transform-origin:100% 0;">988.0</div>
<div class="t" style="left:632.12px;top:403.11px;font-size:9.5px;color:#1f1f1f;font-weight:normal;letter-spacing:0px;transform:scaleX(0.8225);transform-origin:100% 0;">30.87</div>
<div class="t" style="left:682.07px;top:403.11px;font-size:9.5px;color:#1f1f1f;font-weight:normal;letter-spacing:0px;transform:scaleX(0.8225);transform-origin:100% 0;">-999.00</div>
<div class="t" style="left:719.00px;top:403.11px;font-size:9.5px;color:#1f1f1f;font-weight:normal;letter-spacing:0px;transform:scaleX(0.8225);transform-origin:0 0;">2.5</div>
<div class="t" style="left:343.50px;top:420.48px;font-size:9.5px;color:#1f1f1f;font-weight:normal;letter-spacing:0px;transform:scaleX(0.8225);transform-origin:0 0;">287.250000</div>
<div class="t" style="left:319.80px;top:420.68px;font-size:9.5px;color:#1f1f1f;font-weight:normal;letter-spacing:0px;transform:scaleX(0.8225);transform-origin:0 0;">13</div>
<div class="t" style="left:455.96px;top:420.48px;font-size:9.5px;color:#1f1f1f;font-weight:normal;letter-spacing:0px;transform:scaleX(0.8225);transform-origin:100% 0;">-82.20</div>
<div class="t" style="left:516.62px;top:420.48px;font-size:9.5px;color:#1f1f1f;font-weight:normal;letter-spacing:0px;transform:scaleX(0.8225);transform-origin:100% 0;">23.80</div>
<div class="t" style="left:574.72px;top:420.48px;font-size:9.5px;color:#1f1f1f;font-weight:normal;letter-spacing:0px;transform:scaleX(0.8225);transform-origin:100% 0;">988.0</div>
<div class="t" style="left:632.12px;top:420.48px;font-size:9.5px;color:#1f1f1f;font-weight:normal;letter-spacing:0px;transform:scaleX(0.8225);transform-origin:100% 0;">33.44</div>
<div class="t" style="left:682.07px;top:420.48px;font-size:9.5px;color:#1f1f1f;font-weight:normal;letter-spacing:0px;transform:scaleX(0.8225);transform-origin:100% 0;">-999.00</div>
<div class="t" style="left:719.00px;top:420.48px;font-size:9.5px;color:#1f1f1f;font-weight:normal;letter-spacing:0px;transform:scaleX(0.8225);transform-origin:0 0;">2.5</div>
<div class="t" style="left:343.50px;top:437.85px;font-size:9.5px;color:#1f1f1f;font-weight:normal;letter-spacing:0px;transform:scaleX(0.8225);transform-origin:0 0;">287.500000</div>
<div class="t" style="left:319.80px;top:438.05px;font-size:9.5px;color:#1f1f1f;font-weight:normal;letter-spacing:0px;transform:scaleX(0.8225);transform-origin:0 0;">14</div>
<div class="t" style="left:455.96px;top:437.85px;font-size:9.5px;color:#1f1f1f;font-weight:normal;letter-spacing:0px;transform:scaleX(0.8225);transform-origin:100% 0;">-81.80</div>
<div class="t" style="left:516.62px;top:437.85px;font-size:9.5px;color:#1f1f1f;font-weight:normal;letter-spacing:0px;transform:scaleX(0.8225);transform-origin:100% 0;">24.40</div>
<div class="t" style="left:574.72px;top:437.85px;font-size:9.5px;color:#1f1f1f;font-weight:normal;letter-spacing:0px;transform:scaleX(0.8225);transform-origin:100% 0;">987.0</div>
<div class="t" style="left:632.12px;top:437.85px;font-size:9.5px;color:#1f1f1f;font-weight:normal;letter-spacing:0px;transform:scaleX(0.8225);transform-origin:100% 0;">33.44</div>
<div class="t" style="left:682.07px;top:437.85px;font-size:9.5px;color:#1f1f1f;font-weight:normal;letter-spacing:0px;transform:scaleX(0.8225);transform-origin:100% 0;">-999.00</div>
<div class="t" style="left:719.00px;top:437.85px;font-size:9.5px;color:#1f1f1f;font-weight:normal;letter-spacing:0px;transform:scaleX(0.8225);transform-origin:0 0;">2.5</div>
<div class="t" style="left:343.50px;top:455.22px;font-size:9.5px;color:#1f1f1f;font-weight:normal;letter-spacing:0px;transform:scaleX(0.8225);transform-origin:0 0;">287.541667</div>
<div class="t" style="left:319.80px;top:455.42px;font-size:9.5px;color:#1f1f1f;font-weight:normal;letter-spacing:0px;transform:scaleX(0.8225);transform-origin:0 0;">15</div>
<div class="t" style="left:455.96px;top:455.22px;font-size:9.5px;color:#1f1f1f;font-weight:normal;letter-spacing:0px;transform:scaleX(0.8225);transform-origin:100% 0;">-81.60</div>
<div class="t" style="left:516.62px;top:455.22px;font-size:9.5px;color:#1f1f1f;font-weight:normal;letter-spacing:0px;transform:scaleX(0.8225);transform-origin:100% 0;">24.60</div>
<div class="t" style="left:574.72px;top:455.22px;font-size:9.5px;color:#1f1f1f;font-weight:normal;letter-spacing:0px;transform:scaleX(0.8225);transform-origin:100% 0;">987.0</div>
<div class="t" style="left:632.12px;top:455.22px;font-size:9.5px;color:#1f1f1f;font-weight:normal;letter-spacing:0px;transform:scaleX(0.8225);transform-origin:100% 0;">33.44</div>
<div class="t" style="left:682.07px;top:455.22px;font-size:9.5px;color:#1f1f1f;font-weight:normal;letter-spacing:0px;transform:scaleX(0.8225);transform-origin:100% 0;">-999.00</div>
<div class="t" style="left:719.00px;top:455.22px;font-size:9.5px;color:#1f1f1f;font-weight:normal;letter-spacing:0px;transform:scaleX(0.8225);transform-origin:0 0;">2.5</div>
<div class="t" style="left:343.50px;top:472.59px;font-size:9.5px;color:#1f1f1f;font-weight:normal;letter-spacing:0px;transform:scaleX(0.8225);transform-origin:0 0;">287.750000</div>
<div class="t" style="left:319.80px;top:472.79px;font-size:9.5px;color:#1f1f1f;font-weight:normal;letter-spacing:0px;transform:scaleX(0.8225);transform-origin:0 0;">16</div>
<div class="t" style="left:455.96px;top:472.59px;font-size:9.5px;color:#1f1f1f;font-weight:normal;letter-spacing:0px;transform:scaleX(0.8225);transform-origin:100% 0;">-81.30</div>
<div class="t" style="left:516.62px;top:472.59px;font-size:9.5px;color:#1f1f1f;font-weight:normal;letter-spacing:0px;transform:scaleX(0.8225);transform-origin:100% 0;">25.10</div>
<div class="t" style="left:574.72px;top:472.59px;font-size:9.5px;color:#1f1f1f;font-weight:normal;letter-spacing:0px;transform:scaleX(0.8225);transform-origin:100% 0;">986.0</div>
<div class="t" style="left:632.12px;top:472.59px;font-size:9.5px;color:#1f1f1f;font-weight:normal;letter-spacing:0px;transform:scaleX(0.8225);transform-origin:100% 0;">33.44</div>
<div class="t" style="left:682.07px;top:472.59px;font-size:9.5px;color:#1f1f1f;font-weight:normal;letter-spacing:0px;transform:scaleX(0.8225);transform-origin:100% 0;">-999.00</div>
<div class="t" style="left:719.00px;top:472.59px;font-size:9.5px;color:#1f1f1f;font-weight:normal;letter-spacing:0px;transform:scaleX(0.8225);transform-origin:0 0;">2.5</div>
<div class="t" style="left:343.50px;top:489.96px;font-size:9.5px;color:#1f1f1f;font-weight:normal;letter-spacing:0px;transform:scaleX(0.8225);transform-origin:0 0;">287.833333</div>
<div class="t" style="left:319.80px;top:490.16px;font-size:9.5px;color:#1f1f1f;font-weight:normal;letter-spacing:0px;transform:scaleX(0.8225);transform-origin:0 0;">17</div>
<div class="t" style="left:455.96px;top:489.96px;font-size:9.5px;color:#1f1f1f;font-weight:normal;letter-spacing:0px;transform:scaleX(0.8225);transform-origin:100% 0;">-81.10</div>
<div class="t" style="left:516.62px;top:489.96px;font-size:9.5px;color:#1f1f1f;font-weight:normal;letter-spacing:0px;transform:scaleX(0.8225);transform-origin:100% 0;">25.30</div>
<div class="t" style="left:574.72px;top:489.96px;font-size:9.5px;color:#1f1f1f;font-weight:normal;letter-spacing:0px;transform:scaleX(0.8225);transform-origin:100% 0;">987.0</div>
<div class="t" style="left:632.12px;top:489.96px;font-size:9.5px;color:#1f1f1f;font-weight:normal;letter-spacing:0px;transform:scaleX(0.8225);transform-origin:100% 0;">36.01</div>
<div class="t" style="left:682.07px;top:489.96px;font-size:9.5px;color:#1f1f1f;font-weight:normal;letter-spacing:0px;transform:scaleX(0.8225);transform-origin:100% 0;">-999.00</div>
<div class="t" style="left:719.00px;top:489.96px;font-size:9.5px;color:#1f1f1f;font-weight:normal;letter-spacing:0px;transform:scaleX(0.8225);transform-origin:0 0;">2.5</div>
<div class="t" style="left:343.50px;top:507.33px;font-size:9.5px;color:#1f1f1f;font-weight:normal;letter-spacing:0px;transform:scaleX(0.8225);transform-origin:0 0;">288.000000</div>
<div class="t" style="left:319.80px;top:507.53px;font-size:9.5px;color:#1f1f1f;font-weight:normal;letter-spacing:0px;transform:scaleX(0.8225);transform-origin:0 0;">18</div>
<div class="t" style="left:455.96px;top:507.33px;font-size:9.5px;color:#1f1f1f;font-weight:normal;letter-spacing:0px;transform:scaleX(0.8225);transform-origin:100% 0;">-80.60</div>
<div class="t" style="left:516.62px;top:507.33px;font-size:9.5px;color:#1f1f1f;font-weight:normal;letter-spacing:0px;transform:scaleX(0.8225);transform-origin:100% 0;">26.10</div>
<div class="t" style="left:574.72px;top:507.33px;font-size:9.5px;color:#1f1f1f;font-weight:normal;letter-spacing:0px;transform:scaleX(0.8225);transform-origin:100% 0;">986.0</div>
<div class="t" style="left:632.12px;top:507.33px;font-size:9.5px;color:#1f1f1f;font-weight:normal;letter-spacing:0px;transform:scaleX(0.8225);transform-origin:100% 0;">33.44</div>
<div class="t" style="left:682.07px;top:507.33px;font-size:9.5px;color:#1f1f1f;font-weight:normal;letter-spacing:0px;transform:scaleX(0.8225);transform-origin:100% 0;">-999.00</div>
<div class="t" style="left:719.00px;top:507.33px;font-size:9.5px;color:#1f1f1f;font-weight:normal;letter-spacing:0px;transform:scaleX(0.8225);transform-origin:0 0;">2.5</div>
<div class="t" style="left:343.50px;top:524.69px;font-size:9.5px;color:#1f1f1f;font-weight:normal;letter-spacing:0px;transform:scaleX(0.8225);transform-origin:0 0;">288.250000</div>
<div class="t" style="left:319.80px;top:524.89px;font-size:9.5px;color:#1f1f1f;font-weight:normal;letter-spacing:0px;transform:scaleX(0.8225);transform-origin:0 0;">19</div>
<div class="t" style="left:455.96px;top:524.69px;font-size:9.5px;color:#1f1f1f;font-weight:normal;letter-spacing:0px;transform:scaleX(0.8225);transform-origin:100% 0;">-80.20</div>
<div class="t" style="left:516.62px;top:524.69px;font-size:9.5px;color:#1f1f1f;font-weight:normal;letter-spacing:0px;transform:scaleX(0.8225);transform-origin:100% 0;">27.00</div>
<div class="t" style="left:574.72px;top:524.69px;font-size:9.5px;color:#1f1f1f;font-weight:normal;letter-spacing:0px;transform:scaleX(0.8225);transform-origin:100% 0;">985.0</div>
<div class="t" style="left:632.12px;top:524.69px;font-size:9.5px;color:#1f1f1f;font-weight:normal;letter-spacing:0px;transform:scaleX(0.8225);transform-origin:100% 0;">33.44</div>
<div class="t" style="left:682.07px;top:524.69px;font-size:9.5px;color:#1f1f1f;font-weight:normal;letter-spacing:0px;transform:scaleX(0.8225);transform-origin:100% 0;">-999.00</div>
<div class="t" style="left:719.00px;top:524.69px;font-size:9.5px;color:#1f1f1f;font-weight:normal;letter-spacing:0px;transform:scaleX(0.8225);transform-origin:0 0;">2.5</div>
<div class="t" style="left:343.50px;top:542.06px;font-size:9.5px;color:#1f1f1f;font-weight:normal;letter-spacing:0px;transform:scaleX(0.8225);transform-origin:0 0;">288.500000</div>
<div class="t" style="left:319.80px;top:542.26px;font-size:9.5px;color:#1f1f1f;font-weight:normal;letter-spacing:0px;transform:scaleX(0.8225);transform-origin:0 0;">20</div>
<div class="t" style="left:455.96px;top:542.06px;font-size:9.5px;color:#1f1f1f;font-weight:normal;letter-spacing:0px;transform:scaleX(0.8225);transform-origin:100% 0;">-80.10</div>
<div class="t" style="left:516.62px;top:542.06px;font-size:9.5px;color:#1f1f1f;font-weight:normal;letter-spacing:0px;transform:scaleX(0.8225);transform-origin:100% 0;">27.80</div>
<div class="t" style="left:574.72px;top:542.06px;font-size:9.5px;color:#1f1f1f;font-weight:normal;letter-spacing:0px;transform:scaleX(0.8225);transform-origin:100% 0;">982.0</div>
<div class="t" style="left:632.12px;top:542.06px;font-size:9.5px;color:#1f1f1f;font-weight:normal;letter-spacing:0px;transform:scaleX(0.8225);transform-origin:100% 0;">33.44</div>
<div class="t" style="left:682.07px;top:542.06px;font-size:9.5px;color:#1f1f1f;font-weight:normal;letter-spacing:0px;transform:scaleX(0.8225);transform-origin:100% 0;">-999.00</div>
<div class="t" style="left:719.00px;top:542.06px;font-size:9.5px;color:#1f1f1f;font-weight:normal;letter-spacing:0px;transform:scaleX(0.8225);transform-origin:0 0;">2.5</div>
<div class="a" style="left:1183px;top:183px;width:12px;height:373px;background:#f0f0f0"></div>
<div class="a" style="left:1185px;top:196px;width:9px;height:199px;background:#cdcdcd"></div>
<svg class="a" style="left:1185.5px;top:186px" width="7" height="5" viewBox="0 0 7 5"><path d="M0.8 4 L3.5 1.2 L6.2 4" stroke="#555" stroke-width="1.2" fill="none"/></svg>
<svg class="a" style="left:1185.5px;top:547.00px" width="7" height="5" viewBox="0 0 7 5"><path d="M0.8 1 L3.5 3.8 L6.2 1" stroke="#555" stroke-width="1.2" fill="none"/></svg>
<div class="a" style="left:308px;top:565px;width:80px;height:14px;background:#e1e1e1;border:1px solid #c0c0c0"></div>
<div class="t" style="left:312.48px;top:567.90px;font-size:9.5px;color:#1f1f1f;font-weight:normal;letter-spacing:0px;transform:scaleX(0.8170);transform-origin:50% 0;">Delete All Tracks</div>
<div class="a" style="left:589px;top:564px;width:40px;height:15px;background:#e1e1e1;border:1px solid #c0c0c0"></div>
<div class="t" style="left:596.85px;top:567.10px;font-size:9.5px;color:#1f1f1f;font-weight:normal;letter-spacing:0px;transform:scaleX(0.7943);transform-origin:50% 0;">Close</div>
<div class="a" style="left:820px;top:182px;width:242px;height:340px;background:#f0f0f0;border:1px solid #8c8c8c;border-right-color:#707070;border-bottom-color:#707070;box-shadow:1px 2px 6px rgba(0,0,0,.35)"></div>
<div class="a" style="left:821px;top:183px;width:240px;height:21px;background:#fff"></div>
<svg class="a" style="left:826.6px;top:186.4px" width="12" height="12" viewBox="0 0 12 12"><circle cx="6" cy="6" r="4.6" stroke="#18a9f0" stroke-width="2.2" fill="none"/><path d="M2 6 H5.4 M6.6 6 H10" stroke="#18a9f0" stroke-width="2"/><rect x="5.35" y="0" width="1.3" height="2.6" fill="#fff"/><rect x="5.35" y="9.4" width="1.3" height="2.6" fill="#fff"/></svg>
<div class="t" style="left:842.00px;top:189.30px;font-size:10px;color:#1c1c1c;font-weight:normal;letter-spacing:0px;transform:scaleX(0.8148);transform-origin:0 0;">Process Cyclone Tracks</div>
<div class="a" style="left:975px;top:193px;width:8px;height:1px;background:#333"></div>
<div class="a" style="left:1007px;top:189px;width:8px;height:7px;border:1px solid #333"></div>
<svg class="a" style="left:1040px;top:188px" width="9" height="9" viewBox="0 0 9 9"><path d="M0.5 0.5 L8.5 8.5 M8.5 0.5 L0.5 8.5" stroke="#333" stroke-width="0.9"/></svg>
<div class="a" style="left:887px;top:211px;width:9px;height:10px;background:#fff;border:1px solid #4a4a4a"></div>
<div class="t" style="left:900.40px;top:212.25px;font-size:9.5px;color:#1f1f1f;font-weight:normal;letter-spacing:0px;transform:scaleX(0.8182);transform-origin:0 0;">Process All Tracks</div>
<div class="t" style="left:828.37px;top:228.95px;font-size:9.5px;color:#1f1f1f;font-weight:normal;letter-spacing:0px;transform:scaleX(0.8199);transform-origin:100% 0;">Track Name:</div>
<div class="a" style="left:887px;top:226px;width:166px;height:16px;background:#e3e3e3;border:1px solid #bcbcbc"></div>
<svg class="a" style="left:1042.30px;top:231.65px" width="7" height="5" viewBox="0 0 7 5"><path d="M0.6 0.6 L3.5 3.5 L6.4 0.6" stroke="#4a4a4a" stroke-width="1" fill="none"/></svg>
<div class="t" style="left:889.60px;top:229.70px;font-size:9.5px;color:#1f1f1f;font-weight:normal;letter-spacing:0px;transform:scaleX(0.8123);transform-origin:0 0;">131999 - IRENE</div>
<div class="a" style="left:837px;top:248px;width:215px;height:202px;border:1px solid #dcdcdc;border-radius:2px"></div>
<div class="a" style="left:839px;top:245px;width:32px;height:6px;background:#f0f0f0"></div>
<div class="t" style="left:843.30px;top:244.95px;font-size:9.5px;color:#1f1f1f;font-weight:normal;letter-spacing:0px;transform:scaleX(0.7928);transform-origin:0 0;">Actions</div>
<div class="a" style="left:847px;top:262px;width:10px;height:10px;background:#fff;border:1px solid #333;border-radius:50%"></div>
<div class="t" style="left:860.30px;top:264.15px;font-size:9.5px;color:#1f1f1f;font-weight:normal;letter-spacing:0px;transform:scaleX(0.8040);transform-origin:0 0;">Compute Translation Speed</div>
<div class="a" style="left:847px;top:284px;width:10px;height:10px;background:#fff;border:1px solid #333;border-radius:50%"></div>
<div class="t" style="left:860.50px;top:285.65px;font-size:9.5px;color:#1f1f1f;font-weight:normal;letter-spacing:0px;transform:scaleX(0.7863);transform-origin:0 0;">Fill Central Pressure with:</div>
<div class="a" style="left:857px;top:299px;width:184px;height:15px;background:#e3e3e3;border:1px solid #bcbcbc"></div>
<svg class="a" style="left:1030.10px;top:304.30px" width="7" height="5" viewBox="0 0 7 5"><path d="M0.6 0.6 L3.5 3.5 L6.4 0.6" stroke="#4a4a4a" stroke-width="1" fill="none"/></svg>
<div class="a" style="left:847px;top:323px;width:10px;height:9px;background:#fff;border:1px solid #333;border-radius:50%"></div>
<div class="t" style="left:860.50px;top:323.85px;font-size:9.5px;color:#1f1f1f;font-weight:normal;letter-spacing:0px;transform:scaleX(0.7900);transform-origin:0 0;">Fill Maximum Wind with:</div>
<div class="a" style="left:857px;top:337px;width:184px;height:15px;background:#e3e3e3;border:1px solid #bcbcbc"></div>
<svg class="a" style="left:1030.10px;top:342.30px" width="7" height="5" viewBox="0 0 7 5"><path d="M0.6 0.6 L3.5 3.5 L6.4 0.6" stroke="#4a4a4a" stroke-width="1" fill="none"/></svg>
<div class="t" style="left:859.80px;top:340.35px;font-size:9.5px;color:#1f1f1f;font-weight:normal;letter-spacing:0px;transform:scaleX(0.8255);transform-origin:0 0;">Dvorak (1984)</div>
<div class="a" style="left:847px;top:362px;width:10px;height:10px;background:#fff;border:1px solid #333;border-radius:50%"></div>
<div class="a" style="left:850px;top:365px;width:4px;height:5px;background:#222;border-radius:50%"></div>
<div class="t" style="left:860.50px;top:363.75px;font-size:9.5px;color:#1f1f1f;font-weight:normal;letter-spacing:0px;transform:scaleX(0.8066);transform-origin:0 0;">Fill Radius of Max. Wind with:</div>
<div class="a" style="left:857px;top:377px;width:184px;height:15px;background:#e3e3e3;border:1px solid #bcbcbc"></div>
<svg class="a" style="left:1030.10px;top:382.20px" width="7" height="5" viewBox="0 0 7 5"><path d="M0.6 0.6 L3.5 3.5 L6.4 0.6" stroke="#4a4a4a" stroke-width="1" fill="none"/></svg>
<div class="t" style="left:859.80px;top:380.25px;font-size:9.5px;color:#1f1f1f;font-weight:normal;letter-spacing:0px;transform:scaleX(0.8280);transform-origin:0 0;">Takagi et al. (2012)</div>
<div class="a" style="left:847px;top:401px;width:10px;height:10px;background:#fff;border:1px solid #333;border-radius:50%"></div>
<div class="t" style="left:860.50px;top:402.45px;font-size:9.5px;color:#1f1f1f;font-weight:normal;letter-spacing:0px;transform:scaleX(0.7947);transform-origin:0 0;">Fill Holland's shape parameter B with:</div>
<div class="a" style="left:857px;top:415px;width:184px;height:15px;background:#e3e3e3;border:1px solid #bcbcbc"></div>
<svg class="a" style="left:1030.10px;top:420.30px" width="7" height="5" viewBox="0 0 7 5"><path d="M0.6 0.6 L3.5 3.5 L6.4 0.6" stroke="#4a4a4a" stroke-width="1" fill="none"/></svg>
<div class="t" style="left:859.80px;top:418.35px;font-size:9.5px;color:#1f1f1f;font-weight:normal;letter-spacing:0px;transform:scaleX(0.8047);transform-origin:0 0;">Constant value</div>
<div class="t" style="left:931.56px;top:436.25px;font-size:9.5px;color:#1f1f1f;font-weight:normal;letter-spacing:0px;transform:scaleX(0.7977);transform-origin:100% 0;">Constant B:</div>
<div class="a" style="left:986px;top:433px;width:56px;height:15px;background:#fff;border:1px solid #8e8e8e"></div>
<div class="t" style="left:988.40px;top:436.30px;font-size:9.5px;color:#1f1f1f;font-weight:normal;letter-spacing:0px;transform:scaleX(0.9305);transform-origin:0 0;">2.5</div>
<div class="a" style="left:837px;top:461px;width:215px;height:30px;border:1px solid #dcdcdc;border-radius:2px"></div>
<div class="a" style="left:842px;top:458px;width:39px;height:6px;background:#f0f0f0"></div>
<div class="t" style="left:843.60px;top:458.05px;font-size:9.5px;color:#1f1f1f;font-weight:normal;letter-spacing:0px;transform:scaleX(0.7703);transform-origin:0 0;">Fill Options</div>
<div class="a" style="left:847px;top:470px;width:10px;height:10px;background:#fff;border:1px solid #333;border-radius:50%"></div>
<div class="t" style="left:860.50px;top:471.25px;font-size:9.5px;color:#1f1f1f;font-weight:normal;letter-spacing:0px;transform:scaleX(0.7981);transform-origin:0 0;">Only Missing Data Points</div>
<div class="a" style="left:968px;top:470px;width:10px;height:10px;background:#fff;border:1px solid #333;border-radius:50%"></div>
<div class="a" style="left:971px;top:473px;width:4px;height:4px;background:#222;border-radius:50%"></div>
<div class="t" style="left:982.10px;top:471.25px;font-size:9.5px;color:#1f1f1f;font-weight:normal;letter-spacing:0px;transform:scaleX(0.8141);transform-origin:0 0;">All Track Points</div>
<div class="a" style="left:849px;top:498px;width:40px;height:15px;background:#e1e1e1;border:1px solid #c0c0c0"></div>
<div class="t" style="left:852.19px;top:501.10px;font-size:9.5px;color:#1f1f1f;font-weight:normal;letter-spacing:0px;transform:scaleX(0.7807);transform-origin:50% 0;">Process</div>
<div class="a" style="left:1012px;top:498px;width:39px;height:15px;background:#e1e1e1;border:1px solid #c0c0c0"></div>
<div class="t" style="left:1019.30px;top:501.20px;font-size:9.5px;color:#1f1f1f;font-weight:normal;letter-spacing:0px;transform:scaleX(0.7655);transform-origin:50% 0;">Close</div>
<div class="a" style="left:1058px;top:513px;width:1px;height:1px;background:#a8a8a8"></div>
<div class="a" style="left:1056px;top:516px;width:1px;height:1px;background:#a8a8a8"></div>
<div class="a" style="left:1058px;top:516px;width:1px;height:1px;background:#a8a8a8"></div>
<div class="a" style="left:1053px;top:518px;width:2px;height:1px;background:#a8a8a8"></div>
<div class="a" style="left:1056px;top:518px;width:1px;height:1px;background:#a8a8a8"></div>
<div class="a" style="left:1058px;top:518px;width:1px;height:1px;background:#a8a8a8"></div>
</body></html>
